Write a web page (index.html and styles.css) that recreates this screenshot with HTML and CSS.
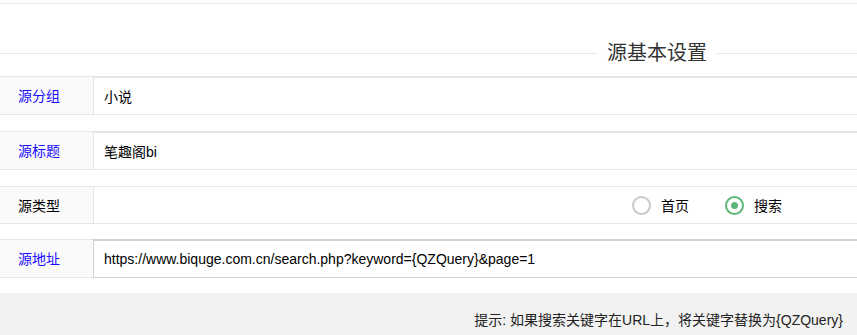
FILE: index.html
```html
<!DOCTYPE html>
<html lang="zh-CN">
<head>
  <meta charset="UTF-8" />
  <title>源基本设置</title>
  <link rel="stylesheet" href="styles.css">
</head>
<body>
  <div class="top-rule"></div>
  <div class="field-title">
    <span class="rule rule-left"></span>
    <span class="legend">源基本设置</span>
    <span class="rule rule-right"></span>
  </div>
  <form class="form-pane">
    <div class="form-item">
      <label class="form-label link">源分组</label>
      <div class="input-block">
        <input class="input" type="text" value="小说" />
      </div>
    </div>
    <div class="form-item">
      <label class="form-label link">源标题</label>
      <div class="input-block">
        <input class="input" type="text" value="笔趣阁bi" />
      </div>
    </div>
    <div class="form-item item-radio">
      <label class="form-label">源类型</label>
      <div class="radio-block">
        <span class="radio"><i class="radio-icon"></i>首页</span>
        <span class="radio checked"><i class="radio-icon"></i>搜索</span>
      </div>
    </div>
    <div class="form-item item-last">
      <label class="form-label link">源地址</label>
      <div class="input-block">
        <input class="input focused" type="text" value="https://www.biquge.com.cn/search.php?keyword={QZQuery}&amp;page=1" />
      </div>
    </div>
  </form>
  <div class="footer">
    <span class="tip">提示: 如果搜索关键字在URL上，将关键字替换为{QZQuery}</span>
  </div>
</body>
</html>
```
FILE: styles.css
```css
html, body {
  margin: 0;
  padding: 0;
  background: #fff;
  color: #333;
  font-family: "Liberation Sans", Arial, "Noto Sans CJK SC", sans-serif;
  font-size: 14px;
  overflow: hidden;
}
.top-rule {
  margin-top: 3px;
  border-top: 1px solid #e6e6e6;
}
.field-title {
  display: flex;
  align-items: center;
  height: 29px;
  margin-top: 35px;
}
.rule {
  height: 1px;
  background: #e6e6e6;
}
.rule-left {
  width: 597px;
}
.rule-right {
  flex: 1;
}
.legend {
  padding: 0 10px;
  font-size: 20px;
  line-height: 29px;
  color: #333;
}
.form-pane {
  margin: 8px 0 0 0;
}
.form-item {
  display: flex;
  height: 39px;
  margin-bottom: 16px;
}
.form-item.item-radio {
  height: 38px;
  margin-bottom: 15px;
}
.form-item.item-last {
  margin-bottom: 15px;
}
.form-label {
  width: 93px;
  flex-shrink: 0;
  box-sizing: border-box;
  padding: 0 0 1px 18px;
  background: #fafafa;
  border-top: 1px solid #e6e6e6;
  border-bottom: 1px solid #e6e6e6;
  display: flex;
  align-items: center;
  color: #000;
  font-size: 14px;
}
.form-label.link {
  color: #1a0dff;
}
.input-block {
  flex: 1;
  margin-right: -2px;
}
.input {
  width: 100%;
  height: 39px;
  box-sizing: border-box;
  border: 1px solid #e6e6e6;
  border-top-width: 2px;
  padding: 0 10px;
  font-family: "Liberation Sans", Arial, "Noto Sans CJK SC", sans-serif;
  font-size: 14px;
  color: #000;
  background: #fff;
  outline: none;
  margin: 0;
}
.input.focused {
  border: 1px solid #d2d2d2;
  border-top-width: 2px;
}
.radio-block {
  flex: 1;
  display: flex;
  justify-content: flex-end;
  align-items: center;
  gap: 36px;
  padding-right: 75px;
  border: 1px solid #e6e6e6;
  border-right: none;
}
.radio {
  display: flex;
  align-items: center;
  gap: 10px;
  color: #000;
  font-size: 14px;
}
.radio-icon {
  width: 19px;
  height: 19px;
  box-sizing: border-box;
  border: 2px solid #c9c9c9;
  border-radius: 50%;
  display: flex;
  align-items: center;
  justify-content: center;
}
.radio.checked .radio-icon {
  border-color: #5fb878;
}
.radio.checked .radio-icon::after {
  content: "";
  width: 7px;
  height: 7px;
  border-radius: 50%;
  background: #5fb878;
}
.footer {
  background: #f2f2f2;
  height: 42px;
  padding: 17px 14px 0 0;
  box-sizing: border-box;
  text-align: right;
  line-height: 20px;
  color: #222;
}
```
